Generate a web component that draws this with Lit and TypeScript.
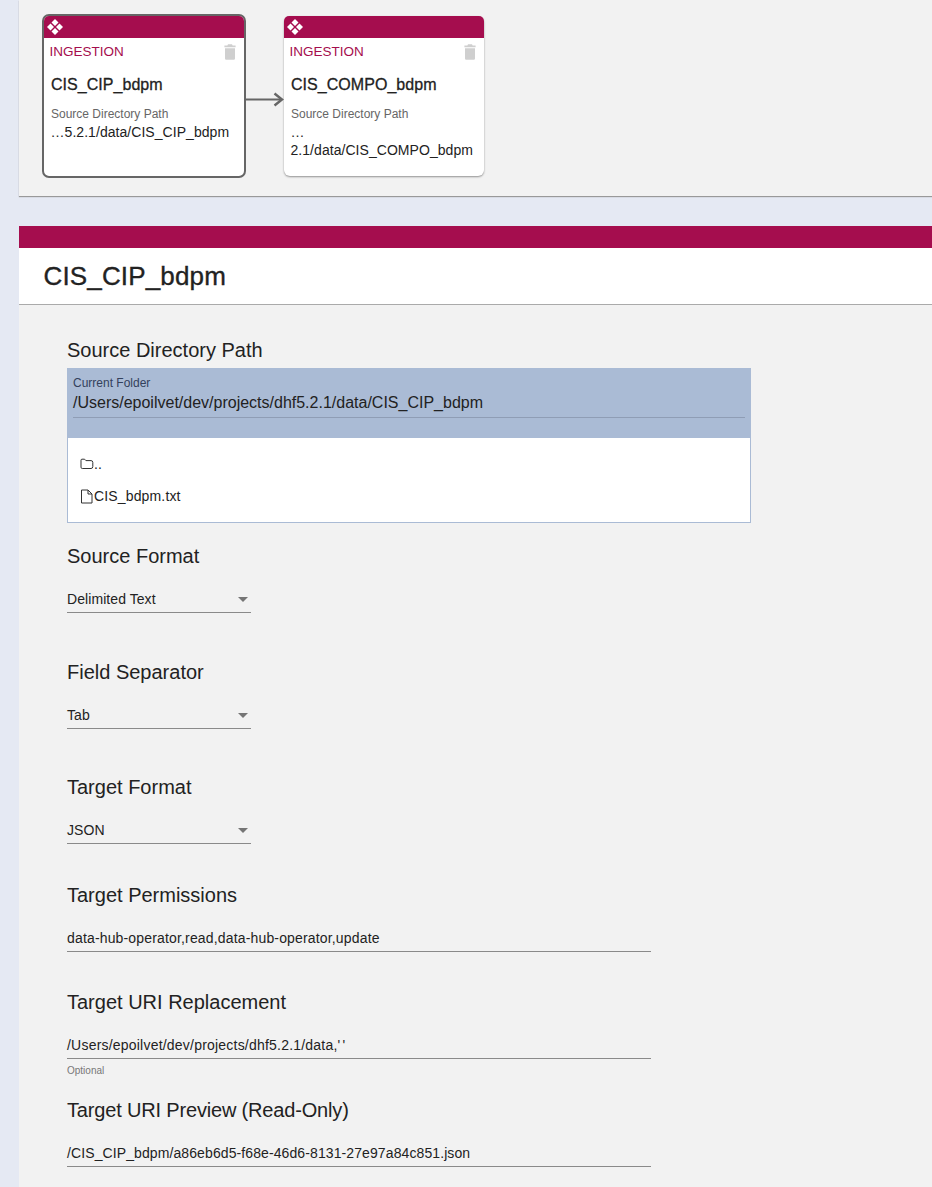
import { LitElement, html, css, svg } from "lit";
import { customElement } from "lit/decorators.js";

const moveIcon = html`<svg class="move" viewBox="0 0 16 16" width="16" height="16" aria-hidden="true">
  <g fill="#fff">
    <path d="M8 0 L11.5 3.5 L8 7 L4.5 3.5 Z"/>
    <path d="M8 9 L11.5 12.5 L8 16 L4.5 12.5 Z"/>
    <path d="M0 8 L3.5 4.5 L7 8 L3.5 11.5 Z"/>
    <path d="M9 8 L12.5 4.5 L16 8 L12.5 11.5 Z"/>
  </g>
</svg>`;

const trashIcon = html`<svg class="trash" viewBox="0 0 12 16" width="12" height="16" aria-hidden="true">
  <path fill="#cfcfcf" d="M4 0.3 H8 L8.6 1.5 H11.6 V3.2 H0.4 V1.5 H3.4 Z M1 4.2 H11 V14.6 Q11 15.8 9.8 15.8 H2.2 Q1 15.8 1 14.6 Z"/>
</svg>`;

const folderIcon = html`<svg class="fi" viewBox="0 0 14 12" width="14" height="12" aria-hidden="true">
  <path fill="none" stroke="#333" stroke-width="1" d="M1 9.2 V2.2 Q1 1.2 2 1.2 H4.6 L5.9 2.6 H11 Q12.8 2.6 12.8 4.4 V8.6 Q12.8 10.5 11 10.5 H2.3 Q1 10.5 1 9.2 Z"/>
</svg>`;

const fileIcon = html`<svg class="fi file" viewBox="0 0 13 15" width="13" height="15" aria-hidden="true">
  <path fill="none" stroke="#333" stroke-width="1" d="M1.5 1 H8 L12 5 V14 H1.5 Z M8 1 V5 H12"/>
</svg>`;

const arrow = svg`<path d="M0 7.5 H35" fill="none" stroke="#666" stroke-width="2"/><path d="M28.5 1.5 L36 7.5 L28.5 13.5" fill="none" stroke="#666" stroke-width="2.4"/>`;

@customElement("app-root")
export class AppRoot extends LitElement {
  static styles = css`
    :host {
      display: block;
      font-family: "Liberation Sans", Arial, sans-serif;
      color: #222;
      background: #e5e9f3;
      padding-left: 19px;
      height: 1187px;
      overflow: hidden;
      box-sizing: border-box;
    }
    * { box-sizing: border-box; }
    .flow {
      height: 196px;
      background: #f2f2f2;
      box-shadow: 0 1px 1px #999;
      display: flex;
      align-items: center;
      padding: 0 0 4px 23px;
    }
    .card {
      width: 200px;
      height: 160px;
      background: #fff;
      border-radius: 6px;
      box-shadow: 0 1px 2px rgba(0,0,0,.4);
      display: flex;
      flex-direction: column;
      flex: none;
    }
    .card.selected {
      width: 204px;
      height: 164px;
      border: 2px solid #666;
      box-shadow: none;
      border-radius: 7px;
    }
    .card-top {
      height: 22px;
      background: #a50d4e;
      border-radius: 5px 5px 0 0;
      padding: 3px 0 0 3px;
      flex: none;
      display: flex;
    }
    .move { display: block; }
    .card-type {
      display: flex;
      justify-content: space-between;
      padding: 6px 8px 0 5.5px;
      font-size: 13.5px;
      line-height: 16px;
      color: #a50d4e;
      height: 24px;
    }
    .card-title {
      margin: 13px 0 0 7px;
      font-size: 16px;
      line-height: 20px;
      font-weight: normal;
      letter-spacing: 0.04px;
      color: #222;
      -webkit-text-stroke: 0.3px #222;
    }
    .card-label {
      margin: 12px 0 0 7px;
      font-size: 12px;
      line-height: 14px;
      color: #666;
    }
    .card-value {
      margin: 2px 0 0 6.5px;
      width: 190px;
      font-size: 14px;
      line-height: 18px;
      letter-spacing: 0.05px;
      color: #222;
    }
    .arrow { width: 38px; height: 15px; flex: none; display: block; margin-top: 6px; }
    .detail { margin-top: 30px; }
    .bar { height: 22px; background: #a50d4e; }
    .title {
      height: 57px;
      background: #fff;
      border-bottom: 1px solid #aaa;
      padding-left: 24.5px;
      display: flex;
      align-items: center;
    }
    .title h1 {
      margin: 0;
      font-size: 26px;
      font-weight: normal;
      line-height: 28px;
      letter-spacing: 0.15px;
      color: #222;
      -webkit-text-stroke: 0.35px #222;
    }
    .form {
      background: #f2f2f2;
      height: 882px;
      padding: 32px 0 0 48px;
    }
    .label {
      font-size: 20px;
      line-height: 26px;
      color: #222;
    }
    .label.tight { letter-spacing: -0.17px; }
    .browser {
      width: 684px;
      height: 155px;
      margin-top: 5px;
      border: 1px solid #aabbd5;
      background: #fff;
    }
    .browser-head {
      height: 70px;
      background: #aabbd5;
      padding: 8px 6px 0 6px;
      margin: -1px -1px 0;
      width: 684px;
    }
    .cf { font-size: 12px; line-height: 14px; color: #33415c; }
    .path {
      font-size: 16px;
      line-height: 20px;
      padding-top: 2px;
      margin-top: 1px;
      height: 27px;
      color: #222;
      border-bottom: 1px solid #8f9db5;
    }
    .entries { padding: 18px 0 0 12px; }
    .entry {
      display: flex;
      align-items: center;
      font-size: 14px;
      letter-spacing: 0.15px;
      line-height: 16px;
      height: 16px;
      color: #222;
      margin-bottom: 16px;
    }
    .fi { display: block; flex: none; }
    .file { margin-right: 1px; }
    .sel {
      width: 184px;
      height: 27px;
      margin-top: 17px;
      border-bottom: 1px solid #8a8a8a;
      display: flex;
      align-items: center;
      justify-content: space-between;
      font-size: 14px;
      letter-spacing: 0.07px;
      color: #222;
      padding-right: 3px;
    }
    .caret {
      width: 0; height: 0;
      border-left: 5px solid transparent;
      border-right: 5px solid transparent;
      border-top: 5px solid #757575;
    }
    .inp {
      width: 584px;
      height: 27px;
      margin-top: 17px;
      border-bottom: 1px solid #8a8a8a;
      display: flex;
      align-items: center;
      font-size: 14px;
      letter-spacing: 0.1px;
      color: #222;
      white-space: pre;
    }
    .perm { letter-spacing: 0.16px; }
    .repl { letter-spacing: 0.21px; }
    .quotes { letter-spacing: 2.2px; }
    .hint {
      font-size: 10px;
      line-height: 12px;
      color: #777;
      margin-top: 6px;
    }
    .group20 { margin-top: 20px; }
    .group37 { margin-top: 37px; }
    .group38 { margin-top: 38px; }
    .group45 { margin-top: 45px; }
    .group46 { margin-top: 46px; }
  `;

  private card(title: string, value: unknown, selected = false) {
    return html`<div class="card ${selected ? "selected" : ""}">
      <div class="card-top">${moveIcon}</div>
      <div class="card-type"><span>INGESTION</span>${trashIcon}</div>
      <div class="card-title">${title}</div>
      <div class="card-label">Source Directory Path</div>
      <div class="card-value">${value}</div>
    </div>`;
  }

  private sel(label: string, value: string, gap: string) {
    return html`<div class=${gap}>
      <div class="label">${label}</div>
      <div class="sel"><span>${value}</span><span class="caret"></span></div>
    </div>`;
  }

  private inp(label: unknown, value: unknown, gap: string, hint = "", tight = false) {
    return html`<div class=${gap}>
      <div class="label ${tight ? "tight" : ""}">${label}</div>
      <div class="inp">${value}</div>
      ${hint ? html`<div class="hint">${hint}</div>` : ""}
    </div>`;
  }

  render() {
    return html`
      <section class="flow">
        ${this.card("CIS_CIP_bdpm", "…5.2.1/data/CIS_CIP_bdpm", true)}
        <svg class="arrow" viewBox="0 0 38 15">${arrow}</svg>
        ${this.card("CIS_COMPO_bdpm", html`…<br />2.1/data/CIS_COMPO_bdpm`)}
      </section>
      <section class="detail">
        <div class="bar"></div>
        <div class="title"><h1>CIS_CIP_bdpm</h1></div>
        <div class="form">
          <div class="label">Source Directory Path</div>
          <div class="browser">
            <div class="browser-head">
              <div class="cf">Current Folder</div>
              <div class="path">/Users/epoilvet/dev/projects/dhf5.2.1/data/CIS_CIP_bdpm</div>
            </div>
            <div class="entries">
              <div class="entry">${folderIcon}<span>..</span></div>
              <div class="entry">${fileIcon}<span>CIS_bdpm.txt</span></div>
            </div>
          </div>
          ${this.sel("Source Format", "Delimited Text", "group20")}
          ${this.sel("Field Separator", "Tab", "group46")}
          ${this.sel("Target Format", "JSON", "group45")}
          ${this.inp(
            "Target Permissions",
            html`<span class="perm">data-hub-operator,read,data-hub-operator,update</span>`,
            "group38"
          )}
          ${this.inp(
            "Target URI Replacement",
            html`<span class="repl">/Users/epoilvet/dev/projects/dhf5.2.1/data,</span><span class="quotes">''</span>`,
            "group37",
            "Optional"
          )}
          ${this.inp(
            "Target URI Preview (Read-Only)",
            "/CIS_CIP_bdpm/a86eb6d5-f68e-46d6-8131-27e97a84c851.json",
            "group20",
            "",
            true
          )}
        </div>
      </section>
    `;
  }
}
